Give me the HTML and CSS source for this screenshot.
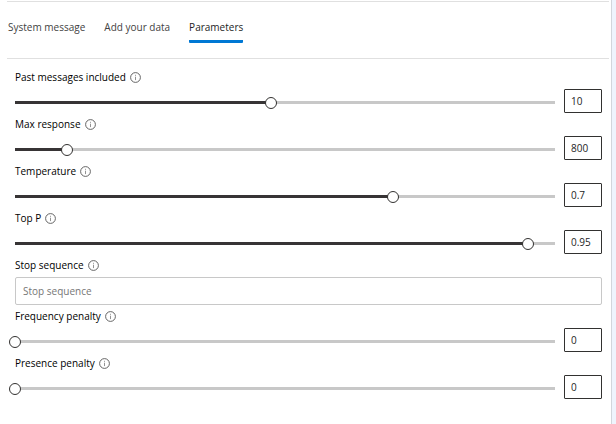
FILE: index.html
```html
<!DOCTYPE html>
<html lang="en">
<head>
    <meta charset="UTF-8">
    <meta name="viewport" content="width=device-width, initial-scale=1.0">
    <title>Parameters</title>
    <link rel="stylesheet" href="styles.css">
</head>
<body>
    <svg width="0" height="0" class="sprite" aria-hidden="true">
        <symbol id="info" viewBox="0 0 11 11">
            <circle cx="5.5" cy="5.5" r="4.9" fill="none" stroke="#555" stroke-width="0.9"/>
            <path d="M5.5 4.7v3.4M5.5 2.8v1" stroke="#777" stroke-width="0.8"/>
        </symbol>
    </svg>
    <main class="panel">
        <nav class="tabs">
            <a href="#system">System message</a>
            <a href="#data">Add your data</a>
            <a href="#parameters" class="active">Parameters</a>
        </nav>
        <form class="params">
            <div class="field">
                <label for="past">Past messages included <svg class="info"><use href="#info"/></svg></label>
                <div class="row">
                    <input type="range" id="past" min="1" max="20" value="10" style="--fill: 0.474">
                    <input type="text" class="value" value="10" aria-label="Past messages included value">
                </div>
            </div>
            <div class="field">
                <label for="max">Max response <svg class="info"><use href="#info"/></svg></label>
                <div class="row">
                    <input type="range" id="max" min="0" max="8300" value="800" style="--fill: 0.096">
                    <input type="text" class="value" value="800" aria-label="Max response value">
                </div>
            </div>
            <div class="field">
                <label for="temperature">Temperature <svg class="info"><use href="#info"/></svg></label>
                <div class="row">
                    <input type="range" id="temperature" min="0" max="1" step="0.01" value="0.7" style="--fill: 0.7">
                    <input type="text" class="value" value="0.7" aria-label="Temperature value">
                </div>
            </div>
            <div class="field">
                <label for="topp">Top P <svg class="info"><use href="#info"/></svg></label>
                <div class="row">
                    <input type="range" id="topp" min="0" max="1" step="0.01" value="0.95" style="--fill: 0.95">
                    <input type="text" class="value" value="0.95" aria-label="Top P value">
                </div>
            </div>
            <div class="field">
                <label for="stop">Stop sequence <svg class="info"><use href="#info"/></svg></label>
                <input type="text" id="stop" class="stop" placeholder="Stop sequence">
            </div>
            <div class="field">
                <label for="frequency">Frequency penalty <svg class="info"><use href="#info"/></svg></label>
                <div class="row">
                    <input type="range" id="frequency" min="0" max="2" step="0.01" value="0" style="--fill: 0">
                    <input type="text" class="value" value="0" aria-label="Frequency penalty value">
                </div>
            </div>
            <div class="field">
                <label for="presence">Presence penalty <svg class="info"><use href="#info"/></svg></label>
                <div class="row">
                    <input type="range" id="presence" min="0" max="2" step="0.01" value="0" style="--fill: 0">
                    <input type="text" class="value" value="0" aria-label="Presence penalty value">
                </div>
            </div>
        </form>
    </main>
</body>
</html>
```
FILE: styles.css
```css
* {
    box-sizing: border-box;
}
body {
    margin: 0;
    background-color: #eff4fd;
    color: #000;
    font-family: "Segoe UI", "Open Sans", sans-serif;
    font-size: 10px;
    line-height: 16px;
}
.sprite {
    position: absolute;
}
.panel {
    min-height: 100vh;
    margin-right: 4px;
    padding: 1px 2px 0 7px;
    background-color: #fff;
    border-right: 1px solid #d2d6dc;
}
.tabs {
    display: flex;
    gap: 19px;
    padding: 17px 1px 15px;
    border-top: 1px solid #e0e0e0;
    border-bottom: 1px solid #e0e0e0;
}
.tabs a {
    height: 24px;
    color: #424242;
    text-decoration: none;
}
.tabs .active {
    color: #242424;
    border-bottom: 3px solid #0078d4;
    border-radius: 1px;
}
.params {
    display: flex;
    flex-direction: column;
    gap: 3px;
    padding: 10px 7px 0 8px;
}
.field label {
    display: flex;
    align-items: center;
    gap: 4px;
    margin-bottom: 4px;
}
.info {
    width: 11px;
    height: 11px;
}
.row {
    display: flex;
    align-items: flex-end;
    gap: 3px;
    margin-left: -6px;
}
input {
    font: inherit;
    color: #242424;
}
input[type="range"] {
    flex: 1;
    min-width: 0;
    height: 12px;
    margin: 0 0 4px;
    appearance: none;
    background:
        linear-gradient(#373435, #373435) 6px 4px / calc((100% - 12px) * var(--fill)) 3px no-repeat,
        linear-gradient(#c8c8c8, #c8c8c8) 6px 4px / calc(100% - 12px) 3px no-repeat;
}
input[type="range"]::-webkit-slider-thumb {
    appearance: none;
    width: 12px;
    height: 12px;
    background: #fff;
    border: 1px solid #323130;
    border-radius: 50%;
}
.value {
    width: 38px;
    height: 24px;
    padding: 0 6px;
    background: #fff;
    border: 1px solid #323130;
    border-radius: 1px;
}
.stop {
    display: block;
    width: 100%;
    height: 28px;
    padding: 0 7px;
    border: 1px solid #c8c8c8;
    border-radius: 2px;
}
.stop::placeholder {
    color: #767676;
}
```
